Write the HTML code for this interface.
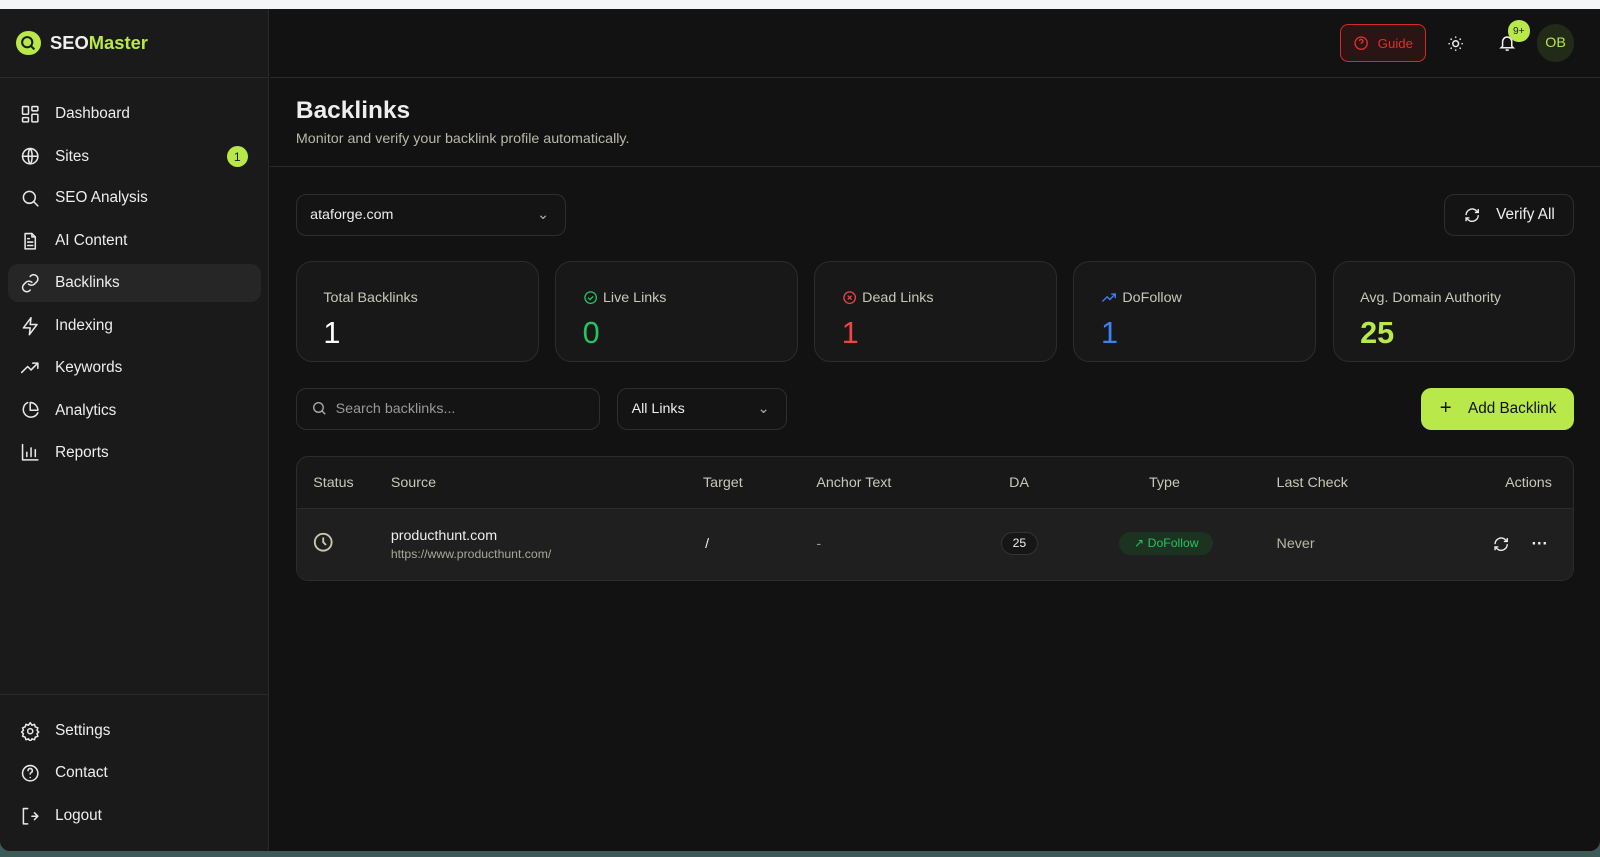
<!DOCTYPE html>
<html><head><meta charset="utf-8"><style>
*{box-sizing:border-box;margin:0;padding:0}
html,body{width:1600px;height:857px;overflow:hidden;background:#3d5a58}
#z{zoom:1.0204;width:1568px;height:840px;position:relative;font-family:"Liberation Sans",sans-serif;color:#eee}
.top{position:absolute;left:0;top:0;width:1568px;height:9px;background:#f4f5f7}
.win{position:absolute;left:0;top:9px;width:1568px;height:825px;background:#121212;border-radius:0 0 10px 10px;overflow:hidden}
.side{position:absolute;left:0;top:0;width:264px;height:825px;background:#1a1a1a;border-right:1px solid #2a2a2a}
.logo{height:67px;border-bottom:1px solid #2a2a2a;display:flex;align-items:center;padding-left:16px;font-weight:bold;font-size:18px}
.logo .ic{width:24px;height:24px;border-radius:50%;background:#b9e84a;margin-right:9px;position:relative}
.nav{position:absolute;left:8px;width:248px;height:37px;display:flex;align-items:center;padding-left:12px;font-size:15px;color:#eee;border-radius:10px}
.nav svg{width:20px;height:20px;margin-right:14px;stroke:#e8e8e8;fill:none;stroke-width:1.8;stroke-linecap:round;stroke-linejoin:round}
.nav.act{background:#262626}
.badge{position:absolute;right:13px;width:21px;height:21px;border-radius:50%;background:#b9e84a;color:#1a1a1a;font-size:12px;display:flex;align-items:center;justify-content:center}
.hdr{position:absolute;left:265px;top:0;right:0;height:67px;border-bottom:1px solid #2a2a2a}
.guide{position:absolute;left:1048px;top:15px;width:85px;height:37px;border:1px solid #d42a2a;border-radius:8px;background:#2a1414;color:#e03030;font-size:13px;display:flex;align-items:center;justify-content:center;gap:8px}
.card{position:absolute;top:247px;width:238px;height:99px;border:1px solid #2c2c2c;border-radius:16px;background:#181818;padding:27px 0 0 26px}
.card .l{font-size:14px;color:#c8c8b8;display:flex;align-items:center;gap:5px}
.card .v{font-size:30px;margin-top:10px}
.box{position:absolute;border:1px solid #2e2e2e;border-radius:10px;background:#141414;display:flex;align-items:center;font-size:14px}
.th{position:absolute;top:457px;font-size:14px;color:#c8c8b8}
</style></head><body><div id="z">
<div class="top"></div>
<div class="win">
<div class="side">
 <div class="logo"><div class="ic"><svg width="24" height="24" viewBox="0 0 24 24"><circle cx="11" cy="11" r="5" fill="none" stroke="#1a1a1a" stroke-width="2"/><path d="M15 15l3 3" stroke="#1a1a1a" stroke-width="2"/></svg></div><span>SEO</span><span style="color:#b9e84a">Master</span></div>
 <div class="nav" style="top:84px"><svg viewBox="0 0 24 24"><rect x="3" y="3" width="7" height="9" rx="1"/><rect x="14" y="3" width="7" height="5" rx="1"/><rect x="14" y="12" width="7" height="9" rx="1"/><rect x="3" y="16" width="7" height="5" rx="1"/></svg>Dashboard</div>
 <div class="nav" style="top:126px"><svg viewBox="0 0 24 24"><circle cx="12" cy="12" r="9"/><path d="M3 12h18M12 3c3 3 3 15 0 18M12 3c-3 3-3 15 0 18"/></svg>Sites<span class="badge">1</span></div>
 <div class="nav" style="top:167px"><svg viewBox="0 0 24 24"><circle cx="11" cy="11" r="7"/><path d="M21 21l-5-5"/></svg>SEO Analysis</div>
 <div class="nav" style="top:209px"><svg viewBox="0 0 24 24"><path d="M14 3H6v18h12V7z"/><path d="M14 3v4h4M9 13h6M9 17h6M9 9h2"/></svg>AI Content</div>
 <div class="nav act" style="top:250px"><svg viewBox="0 0 24 24"><path d="M10 13a5 5 0 0 0 7 0l3-3a5 5 0 0 0-7-7l-1 1"/><path d="M14 11a5 5 0 0 0-7 0l-3 3a5 5 0 0 0 7 7l1-1"/></svg>Backlinks</div>
 <div class="nav" style="top:292px"><svg viewBox="0 0 24 24"><path d="M13 2L4 14h8l-1 8 9-12h-8z"/></svg>Indexing</div>
 <div class="nav" style="top:333px"><svg viewBox="0 0 24 24"><path d="M2 17l7-7 4 4 8-8M15 6h6v6"/></svg>Keywords</div>
 <div class="nav" style="top:375px"><svg viewBox="0 0 24 24"><path d="M21 15A9 9 0 1 1 9 3"/><path d="M21 12A9 9 0 0 0 12 3v9z"/></svg>Analytics</div>
 <div class="nav" style="top:416px"><svg viewBox="0 0 24 24"><path d="M3 3v18h18M8 17v-5M13 17V7M18 17v-8"/></svg>Reports</div>
 <div style="position:absolute;left:0;top:671px;width:264px;border-top:1px solid #2a2a2a"></div>
 <div class="nav" style="top:689px"><svg viewBox="0 0 24 24"><circle cx="12" cy="12" r="3"/><path d="M12 2l2 3 3-1 1 3 3 1-1 3 2 2-2 2 1 3-3 1-1 3-3-1-2 3-2-3-3 1-1-3-3-1 1-3-2-2 2-2-1-3 3-1 1-3 3 1z"/></svg>Settings</div>
 <div class="nav" style="top:730px"><svg viewBox="0 0 24 24"><circle cx="12" cy="12" r="9"/><path d="M9.5 9a2.5 2.5 0 1 1 3.5 2.3c-.7.4-1 1-1 1.7M12 17h.01"/></svg>Contact</div>
 <div class="nav" style="top:772px"><svg viewBox="0 0 24 24"><path d="M9 3H4v18h5M14 12h7M17 8l4 4-4 4"/></svg>Logout</div>
</div>
<div class="hdr">
 <div class="guide"><svg width="16" height="16" viewBox="0 0 24 24" fill="none" stroke="#e03030" stroke-width="2"><circle cx="12" cy="12" r="9"/><path d="M9.5 9a2.5 2.5 0 1 1 3.5 2.3c-.7.4-1 1-1 1.7M12 17h.01"/></svg>Guide</div>
 <svg style="position:absolute;left:1153px;top:25px" width="17" height="17" viewBox="0 0 24 24" fill="none" stroke="#eee" stroke-width="2"><circle cx="12" cy="12" r="4"/><path d="M12 2v2M12 20v2M2 12h2M20 12h2M5 5l1.5 1.5M17.5 17.5L19 19M5 19l1.5-1.5M17.5 6.5L19 5"/></svg>
 <svg style="position:absolute;left:1203px;top:24px" width="18" height="18" viewBox="0 0 24 24" fill="none" stroke="#eee" stroke-width="2"><path d="M6 16V10a6 6 0 0 1 12 0v6l2 2H4z"/><path d="M10 21h4"/></svg>
 <div style="position:absolute;left:1213px;top:11px;width:21px;height:21px;border-radius:50%;background:#b9e84a;color:#1a1a1a;font-size:10px;display:flex;align-items:center;justify-content:center">9+</div>
 <div style="position:absolute;left:1241px;top:15px;width:37px;height:37px;border-radius:50%;background:#222a18;color:#b9e84a;font-size:14px;display:flex;align-items:center;justify-content:center">OB</div>
</div>
<div style="position:absolute;left:290px;top:86px;font-size:24px;font-weight:bold">Backlinks</div>
<div style="position:absolute;left:290px;top:119px;font-size:14px;color:#b8b8a8">Monitor and verify your backlink profile automatically.</div>
<div style="position:absolute;left:265px;top:154px;right:0;border-top:1px solid #2a2a2a"></div>
<div class="box" style="left:290px;top:181px;width:265px;height:41px;padding-left:13px">ataforge.com<span style="position:absolute;right:16px;color:#aaa">⌄</span></div>
<div class="box" style="left:1415px;top:181px;width:128px;height:41px;justify-content:center;gap:16px;font-size:15px"><svg width="16" height="16" viewBox="0 0 24 24" fill="none" stroke="#eee" stroke-width="2"><path d="M3 12a9 9 0 0 1 15-6.7L21 8M21 3v5h-5M21 12a9 9 0 0 1-15 6.7L3 16M3 21v-5h5"/></svg>Verify All</div>
<div class="card" style="left:290px"><div class="l">Total Backlinks</div><div class="v" style="color:#fff">1</div></div>
<div class="card" style="left:544px"><div class="l"><svg width="15" height="15" viewBox="0 0 24 24" fill="none" stroke="#22c55e" stroke-width="2"><circle cx="12" cy="12" r="9"/><path d="M8 12l3 3 5-5"/></svg>Live Links</div><div class="v" style="color:#22c55e">0</div></div>
<div class="card" style="left:798px"><div class="l"><svg width="15" height="15" viewBox="0 0 24 24" fill="none" stroke="#ef4444" stroke-width="2"><circle cx="12" cy="12" r="9"/><path d="M9 9l6 6M15 9l-6 6"/></svg>Dead Links</div><div class="v" style="color:#ef4444">1</div></div>
<div class="card" style="left:1052px"><div class="l"><svg width="16" height="16" viewBox="0 0 24 24" fill="none" stroke="#3b82f6" stroke-width="2"><path d="M2 17l7-7 4 4 8-8M15 6h6v6"/></svg>DoFollow</div><div class="v" style="color:#3b82f6">1</div></div>
<div class="card" style="left:1306px"><div class="l">Avg. Domain Authority</div><div class="v" style="color:#b9e84a;font-weight:bold">25</div></div>
<div class="box" style="left:290px;top:371px;width:298px;height:41px;padding-left:14px;color:#999"><svg width="16" height="16" viewBox="0 0 24 24" fill="none" stroke="#aaa" stroke-width="2" style="margin-right:8px"><circle cx="11" cy="11" r="7"/><path d="M21 21l-5-5"/></svg>Search backlinks...</div>
<div class="box" style="left:605px;top:371px;width:166px;height:41px;padding-left:13px">All Links<span style="position:absolute;right:16px;color:#aaa">⌄</span></div>
<div style="position:absolute;left:1393px;top:371px;width:150px;height:41px;border-radius:10px;background:#b9e84a;color:#111;font-size:15px;display:flex;align-items:center;padding-left:18px;gap:16px"><span style="font-size:20px">+</span>Add Backlink</div>
<div style="position:absolute;left:290px;top:438px;width:1253px;height:122px;border:1px solid #2c2c2c;border-radius:12px;background:#181818;overflow:hidden">
 <div style="position:absolute;left:0;top:50px;width:100%;height:72px;background:#1f1f1f;border-top:1px solid #2c2c2c"></div>
</div>
<div class="th" style="left:307px">Status</div><div class="th" style="left:383px">Source</div><div class="th" style="left:689px">Target</div><div class="th" style="left:800px">Anchor Text</div><div class="th" style="left:989px">DA</div><div class="th" style="left:1126px">Type</div><div class="th" style="left:1251px">Last Check</div><div class="th" style="left:1475px">Actions</div>
<svg style="position:absolute;left:306px;top:511px" width="22" height="22" viewBox="0 0 24 24" fill="none" stroke="#c8c8a8" stroke-width="2"><circle cx="12" cy="12" r="9"/><path d="M12 7v5l3 3"/></svg>
<div style="position:absolute;left:383px;top:508px;font-size:14px">producthunt.com</div>
<div style="position:absolute;left:383px;top:527px;font-size:12px;color:#a8a898">https://www.producthunt.com/</div>
<div style="position:absolute;left:691px;top:516px;font-size:14px">/</div>
<div style="position:absolute;left:800px;top:516px;font-size:14px;color:#999">-</div>
<div style="position:absolute;left:981px;top:512px;width:36px;height:23px;border:1px solid #333;border-radius:12px;font-size:12px;display:flex;align-items:center;justify-content:center;background:#161616">25</div>
<div style="position:absolute;left:1097px;top:512px;width:92px;height:23px;border-radius:12px;background:#1c3322;color:#22c55e;font-size:12px;display:flex;align-items:center;justify-content:center">↗ DoFollow</div>
<div style="position:absolute;left:1251px;top:516px;font-size:14px;color:#b8b8a8">Never</div>
<svg style="position:absolute;left:1463px;top:516px" width="16" height="16" viewBox="0 0 24 24" fill="none" stroke="#eee" stroke-width="2"><path d="M3 12a9 9 0 0 1 15-6.7L21 8M21 3v5h-5M21 12a9 9 0 0 1-15 6.7L3 16M3 21v-5h5"/></svg>
<div style="position:absolute;left:1501px;top:515px;font-size:16px;font-weight:bold">···</div>
</div>
</div></body></html>
